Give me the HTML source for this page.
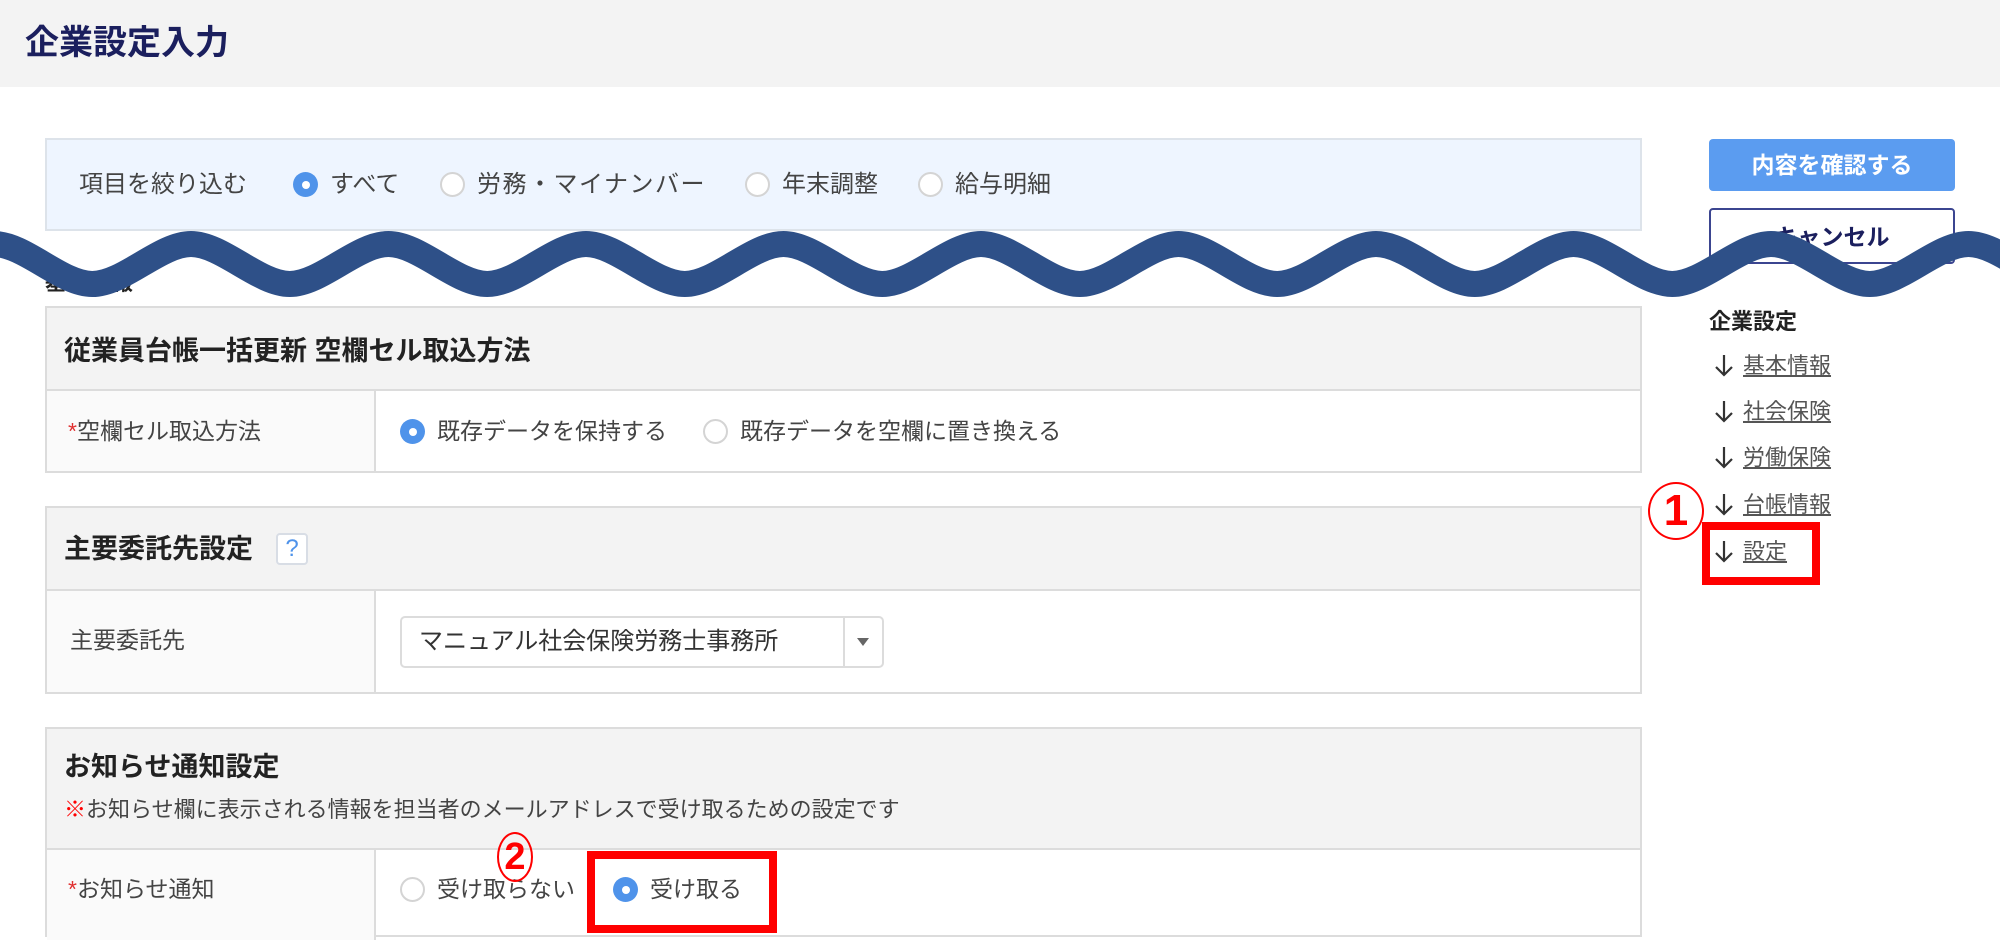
<!DOCTYPE html>
<html><head><meta charset="utf-8"><style>
*{margin:0;padding:0;box-sizing:border-box}
body{width:2000px;height:942px;position:relative;background:#fff;font-family:"Liberation Sans","Noto Sans CJK JP",sans-serif;color:#444;overflow:hidden}
.a{position:absolute;white-space:nowrap}
.hdr{left:0;top:0;width:2000px;height:87px;background:#f3f3f3}
.title{left:25px;top:21px;font-size:34px;line-height:44px;font-weight:bold;color:#1b1f5e}
.filter{left:45px;top:138px;width:1597px;height:93px;background:#eef5ff;border:2px solid #dde3ea}
.t{font-size:24px;line-height:30px}
.s{font-size:23px;line-height:30px}
.r{position:absolute;width:25px;height:25px;border-radius:50%;border:2px solid #d4d4d4;background:#fff}
.r.on{border:none;background:#4f93ea}
.r.on::after{content:"";position:absolute;left:8.5px;top:8.5px;width:8px;height:8px;border-radius:50%;background:#fff}
.box{position:absolute;left:45px;width:1597px;border:2px solid #dcdcdc;background:#fff}
.bh{position:absolute;left:0;top:0;width:100%;background:#f3f3f3;border-bottom:2px solid #dcdcdc}
.lab{position:absolute;left:0;width:329px;background:#fafafa;border-right:2px solid #dcdcdc}
.ht{font-size:27px;line-height:34px;font-weight:bold;color:#222}
.req{color:#e03030}
.btn1{left:1709px;top:139px;width:246px;height:52px;background:#5b9cf0;border-radius:4px;color:#fff;font-weight:bold;font-size:23px;text-align:center;line-height:52px}
.btn2{left:1709px;top:208px;width:246px;height:56px;border:2px solid #3b4590;border-radius:4px;color:#1b1f5e;font-weight:bold;font-size:23px;text-align:center;line-height:54px}
.nav{font-size:22px;line-height:28px;color:#555}
.nav u{text-decoration:underline}
.nav svg{vertical-align:-4px;margin-right:8px}
.redbox{position:absolute;border:8px solid #f00}
.circ{position:absolute;border:2px solid #f00;border-radius:50%;color:#f00;font-weight:bold;text-align:center}
</style></head><body>
<div class="a hdr"></div>
<div class="a title">企業設定入力</div>

<div class="a filter"></div>
<div class="a t" style="left:79px;top:170px">項目を絞り込む</div>
<div class="r on" style="left:293px;top:172px"></div><div class="a t" style="left:330px;top:170px">すべて</div>
<div class="r" style="left:440px;top:172px"></div><div class="a t" style="left:477px;top:170px;letter-spacing:1.5px">労務・マイナンバー</div>
<div class="r" style="left:745px;top:172px"></div><div class="a t" style="left:782px;top:170px">年末調整</div>
<div class="r" style="left:918px;top:172px"></div><div class="a t" style="left:955px;top:170px">給与明細</div>

<div class="a btn1">内容を確認する</div>
<div class="a btn2">キャンセル</div>

<div class="a ht" style="left:45px;top:266px;font-size:22px">基本情報</div>

<div class="box" style="top:306px;height:167px">
 <div class="bh" style="height:83px"></div>
 <div class="lab" style="top:83px;height:80px"></div>
</div>
<div class="a ht" style="left:64px;top:334px">従業員台帳一括更新 空欄セル取込方法</div>
<div class="a s" style="left:68px;top:416px"><span class="req">*</span>空欄セル取込方法</div>
<div class="r on" style="left:400px;top:419px"></div><div class="a s" style="left:437px;top:416px">既存データを保持する</div>
<div class="r" style="left:703px;top:419px"></div><div class="a s" style="left:740px;top:416px">既存データを空欄に置き換える</div>

<div class="box" style="top:506px;height:188px">
 <div class="bh" style="height:83px"></div>
 <div class="lab" style="top:83px;height:101px"></div>
</div>
<div class="a ht" style="left:64px;top:532px">主要委託先設定</div>
<div class="a" style="left:276px;top:533px;width:32px;height:32px;border:2px solid #d8dde5;border-radius:4px;background:#fff;color:#4f93ea;font-size:24px;text-align:center;line-height:28px">?</div>
<div class="a s" style="left:70px;top:625px">主要委託先</div>
<div class="a" style="left:400px;top:616px;width:484px;height:52px;border:2px solid #dcdcdc;border-radius:5px;background:#fff"></div>
<div class="a" style="left:843px;top:618px;width:2px;height:48px;background:#dcdcdc"></div>
<div class="a t" style="left:419px;top:627px;color:#333">マニュアル社会保険労務士事務所</div>
<div class="a" style="left:857px;top:638px;width:0;height:0;border-left:6px solid transparent;border-right:6px solid transparent;border-top:8px solid #666"></div>

<div class="box" style="top:727px;height:210px">
 <div class="bh" style="height:121px"></div>
 <div class="lab" style="top:121px;height:90px"></div>
</div>
<div class="a ht" style="left:64px;top:750px">お知らせ通知設定</div>
<div class="a s" style="left:64px;top:795px;font-size:22px"><span style="color:#f00;font-weight:bold">※</span>お知らせ欄に表示される情報を担当者のメールアドレスで受け取るための設定です</div>
<div class="a s" style="left:68px;top:874px"><span class="req">*</span>お知らせ通知</div>
<div class="r" style="left:400px;top:877px"></div><div class="a s" style="left:437px;top:874px">受け取らない</div>
<div class="r on" style="left:613px;top:877px"></div><div class="a s" style="left:650px;top:874px">受け取る</div>
<div class="redbox" style="left:587px;top:851px;width:190px;height:82px"></div>
<div class="circ" style="left:497px;top:832px;width:36px;height:50px;font-size:38px;line-height:46px">2</div>

<div class="a ht" style="left:1709px;top:305px;font-size:22px">企業設定</div>
<div class="a nav" style="left:1713px;top:352px"><svg width="22" height="24" viewBox="0 0 22 24"><path d="M11 2V22M3 14L11 22L19 14" fill="none" stroke="#333" stroke-width="2.2"/></svg><u>基本情報</u></div>
<div class="a nav" style="left:1713px;top:398px"><svg width="22" height="24" viewBox="0 0 22 24"><path d="M11 2V22M3 14L11 22L19 14" fill="none" stroke="#333" stroke-width="2.2"/></svg><u>社会保険</u></div>
<div class="a nav" style="left:1713px;top:444px"><svg width="22" height="24" viewBox="0 0 22 24"><path d="M11 2V22M3 14L11 22L19 14" fill="none" stroke="#333" stroke-width="2.2"/></svg><u>労働保険</u></div>
<div class="a nav" style="left:1713px;top:491px"><svg width="22" height="24" viewBox="0 0 22 24"><path d="M11 2V22M3 14L11 22L19 14" fill="none" stroke="#333" stroke-width="2.2"/></svg><u>台帳情報</u></div>
<div class="a nav" style="left:1713px;top:538px"><svg width="22" height="24" viewBox="0 0 22 24"><path d="M11 2V22M3 14L11 22L19 14" fill="none" stroke="#333" stroke-width="2.2"/></svg><u>設定</u></div>
<div class="redbox" style="left:1702px;top:522px;width:118px;height:63px"></div>
<div class="circ" style="left:1648px;top:482px;width:56px;height:58px;font-size:44px;line-height:54px">1</div>

<svg class="a" style="left:0;top:0" width="2000" height="942">
<path fill="none" stroke="#2e5088" stroke-width="26" stroke-linecap="round" d="M -6.5 244 C 25 244, 61 284, 92.25 284 S 160 244, 191 244 S 258.75 284, 289.75 284 S 357.5 244, 388.5 244 S 456.25 284, 487.25 284 S 555 244, 586 244 S 653.75 284, 684.75 284 S 752.5 244, 783.5 244 S 851.25 284, 882.25 284 S 950 244, 981 244 S 1048.75 284, 1079.75 284 S 1147.5 244, 1178.5 244 S 1246.25 284, 1277.25 284 S 1345 244, 1376 244 S 1443.75 284, 1474.75 284 S 1542.5 244, 1573.5 244 S 1641.25 284, 1672.25 284 S 1740 244, 1771 244 S 1838.75 284, 1869.75 284 S 1937.5 244, 1968.5 244 S 2036.25 284, 2067.25 284"/>
</svg>
</body></html>
